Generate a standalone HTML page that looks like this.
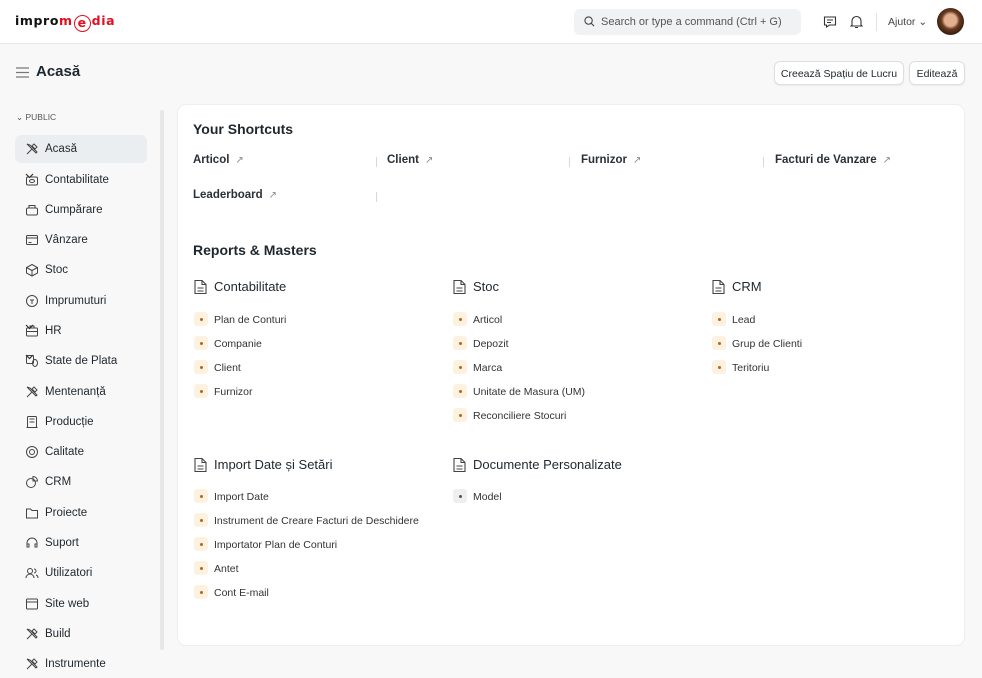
<!DOCTYPE html>
<html><head><meta charset="utf-8"><style>
*{box-sizing:border-box;margin:0;padding:0}
body{width:982px;height:678px;overflow:hidden;background:#f8f8f8;font-family:"Liberation Sans",sans-serif;color:#1f272e;position:relative}
.hdr{position:absolute;left:0;top:0;width:982px;height:44px;background:#fff;border-bottom:1px solid #e8e9ea}
.abs{position:absolute}
.search{left:574px;top:9px;width:227px;height:26px;background:#f1f2f3;border-radius:6px;font-size:11px;color:#555;padding:7px 0 0 27px}
.btn{background:#fff;border:1px solid #dcdfe2;border-radius:6px;font-size:10.5px;height:24px;top:61px;padding:6px 0 0;text-align:center;color:#1f272e;box-shadow:0 1px 2px rgba(0,0,0,.06)}
.side{left:15px;width:132px;height:28px;font-size:11.5px;color:#1f272e;padding:8px 0 0 30px;border-radius:6px}
.side svg{position:absolute;left:10px;top:7px}
.chev{position:absolute;left:112px;top:9px}
.card{left:177px;top:104px;width:788px;height:542px;background:#fff;border:1px solid #eceef0;border-radius:9px}
.h2{font-size:14px;font-weight:bold}
.sc{font-size:11.5px;font-weight:bold;color:#2a3036}
.sc span{color:#888;font-weight:normal;font-size:10px;margin-left:6px}
.sep{width:1px;height:10px;background:#d8d8d8}
.gh{font-size:13px;color:#1f272e}
.gh svg{position:absolute;left:0;top:0}
.it{font-size:10.5px;color:#333}
.it i{position:absolute;left:-20px;top:-2px;width:14px;height:14px;background:#fdf1e0;border-radius:3px}
.it i:after{content:"";position:absolute;left:6px;top:6px;width:3px;height:3px;border-radius:50%;background:#b5651d}
.it i.g{background:#eeeff1}.it i.g:after{background:#555}
</style></head><body>
<div class="hdr">
 <div class="abs" style="left:15px;top:14px;font-size:12.5px;font-weight:bold;letter-spacing:0.6px;font-family:'DejaVu Sans',sans-serif;line-height:14px"><span style="color:#111">impro</span><span style="color:#e01020">m<span style="display:inline-block;border:1.5px solid #e01020;border-radius:50%;width:17px;height:17px;text-align:center;line-height:14px;margin:0 1px;vertical-align:-2px">e</span>dia</span></div>
 <div class="abs search"><svg class="abs" style="left:10px;top:7px" width="11" height="11" viewBox="0 0 12 12"><circle cx="5" cy="5" r="4" fill="none" stroke="#444" stroke-width="1.2"/><path d="M8 8l3 3" stroke="#444" stroke-width="1.2"/></svg>Search or type a command (Ctrl + G)</div>
 <svg class="abs" style="left:823px;top:15px" width="14" height="14" viewBox="0 0 14 14"><path d="M1.5 2h11v8h-6l-3 2v-2h-2z" fill="none" stroke="#333" stroke-width="1.1"/><path d="M4 5h6M4 7.5h4" stroke="#333"/></svg>
 <svg class="abs" style="left:850px;top:14px" width="13" height="15" viewBox="0 0 13 15"><path d="M2 11V7a4.5 4.5 0 019 0v4l1 1H1z M5 13.5h3" fill="none" stroke="#333" stroke-width="1.1"/></svg>
 <div class="abs" style="left:876px;top:13px;width:1px;height:18px;background:#e2e2e2"></div>
 <div class="abs" style="left:888px;top:16px;font-size:10.5px;color:#444">Ajutor ⌄</div>
 <div class="abs" style="left:937px;top:8px;width:27px;height:27px;border-radius:50%;background:radial-gradient(circle at 50% 45%,#e0b090 0 30%,#6a3a20 45%,#3a2010 70%,#b03020 100%)"></div>
</div>
<svg class="abs" style="left:16px;top:67px" width="13" height="11" viewBox="0 0 13 11"><path d="M0 1h13M0 5.5h13M0 10h13" stroke="#777" stroke-width="1.2"/></svg>
<div class="abs" style="left:36px;top:63px;font-size:15px;font-weight:bold">Acasă</div>
<div class="abs btn" style="left:774px;width:130px">Creează Spațiu de Lucru</div>
<div class="abs btn" style="left:909px;width:56px">Editează</div>

<div class="abs" style="left:16px;top:112px;font-size:8.5px;color:#555">⌄ PUBLIC</div>
<div class="abs" style="left:160px;top:110px;width:4px;height:540px;background:#e6e7e9;border-radius:2px"></div>
<div class="abs side" style="top:135px;background:#ebeef0"><svg width="14" height="14" viewBox="0 0 14 14" fill="none" stroke="#444"><path d="M2 12l5-5M9 2l3 3-2 2-3-3zM2 2l3 1 7 7-1 1-7-7z"/></svg>Acasă</div>
<div class="abs side" style="top:165.5px"><svg width="14" height="14" viewBox="0 0 14 14" fill="none" stroke="#444"><rect x="1.5" y="4" width="11" height="8" rx="1.5"/><ellipse cx="7" cy="8" rx="2.5" ry="1.5"/></svg>Contabilitate<svg class="chev" width="9" height="6" viewBox="0 0 9 6"><path d="M1 1l3.5 3.5L8 1" fill="none" stroke="#333" stroke-width="1.2"/></svg></div>
<div class="abs side" style="top:195.8px"><svg width="14" height="14" viewBox="0 0 14 14" fill="none" stroke="#444"><rect x="1.5" y="5" width="11" height="7" rx="1.5"/><path d="M4 5V2.5h6V5"/></svg>Cumpărare</div>
<div class="abs side" style="top:226px"><svg width="14" height="14" viewBox="0 0 14 14" fill="none" stroke="#444"><rect x="1.5" y="2.5" width="11" height="9" rx="1"/><path d="M1.5 5h11M3.5 9.5h3"/></svg>Vânzare</div>
<div class="abs side" style="top:256.3px"><svg width="14" height="14" viewBox="0 0 14 14" fill="none" stroke="#444"><path d="M7 1.5l5.5 3v5.5L7 13 1.5 10V4.5zM1.5 4.5L7 7.5l5.5-3M7 7.5V13"/></svg>Stoc</div>
<div class="abs side" style="top:286.6px"><svg width="14" height="14" viewBox="0 0 14 14" fill="none" stroke="#444"><circle cx="7" cy="7" r="5.5"/><path d="M5 6h4M7 6v4"/></svg>Imprumuturi</div>
<div class="abs side" style="top:316.9px"><svg width="14" height="14" viewBox="0 0 14 14" fill="none" stroke="#444"><rect x="1.5" y="4" width="11" height="8" rx="1"/><path d="M5 4V2h4v2M1.5 7.5h11"/></svg>HR<svg class="chev" width="9" height="6" viewBox="0 0 9 6"><path d="M1 1l3.5 3.5L8 1" fill="none" stroke="#333" stroke-width="1.2"/></svg></div>
<div class="abs side" style="top:347.2px"><svg width="14" height="14" viewBox="0 0 14 14" fill="none" stroke="#444"><rect x="1.5" y="1.5" width="7" height="8" rx="1"/><ellipse cx="10" cy="9" rx="2.5" ry="3.5"/></svg>State de Plata<svg class="chev" width="9" height="6" viewBox="0 0 9 6"><path d="M1 1l3.5 3.5L8 1" fill="none" stroke="#333" stroke-width="1.2"/></svg></div>
<div class="abs side" style="top:377.5px"><svg width="14" height="14" viewBox="0 0 14 14" fill="none" stroke="#444"><path d="M2 12l5-5M9 2l3 3-2 2-3-3zM2 2l3 1 7 7-1 1-7-7z"/></svg>Mentenanță</div>
<div class="abs side" style="top:407.8px"><svg width="14" height="14" viewBox="0 0 14 14" fill="none" stroke="#444"><rect x="2.5" y="1.5" width="9" height="11" rx="1"/><path d="M4.5 4h5M4.5 7h5M1.5 12.5h11"/></svg>Producție</div>
<div class="abs side" style="top:438px"><svg width="14" height="14" viewBox="0 0 14 14" fill="none" stroke="#444"><circle cx="7" cy="7" r="5.5"/><circle cx="7" cy="7" r="2.5"/></svg>Calitate</div>
<div class="abs side" style="top:468.3px"><svg width="14" height="14" viewBox="0 0 14 14" fill="none" stroke="#444"><circle cx="6" cy="8" r="4.5"/><path d="M8 1.5a4.5 4.5 0 014.5 4.5H8z"/></svg>CRM</div>
<div class="abs side" style="top:498.6px"><svg width="14" height="14" viewBox="0 0 14 14" fill="none" stroke="#444"><path d="M1.5 3h4l1.5 1.5h5.5v7.5h-11z"/></svg>Proiecte</div>
<div class="abs side" style="top:528.9px"><svg width="14" height="14" viewBox="0 0 14 14" fill="none" stroke="#444"><path d="M2 9V7a5 5 0 0110 0v2M2 8h2v3H2zM10 8h2v3h-2z"/></svg>Suport</div>
<div class="abs side" style="top:559.2px"><svg width="14" height="14" viewBox="0 0 14 14" fill="none" stroke="#444"><circle cx="5" cy="5" r="2.5"/><path d="M1 12a4 4 0 018 0M9 3a2 2 0 010 4M11 9a3 3 0 012 3"/></svg>Utilizatori</div>
<div class="abs side" style="top:589.5px"><svg width="14" height="14" viewBox="0 0 14 14" fill="none" stroke="#444"><rect x="1.5" y="2" width="11" height="10" rx="1"/><path d="M1.5 5h11"/></svg>Site web</div>
<div class="abs side" style="top:619.8px"><svg width="14" height="14" viewBox="0 0 14 14" fill="none" stroke="#444"><path d="M2 12l5-5M9 2l3 3-2 2-3-3zM2 2l3 1 7 7-1 1-7-7z"/></svg>Build</div>
<div class="abs side" style="top:650px"><svg width="14" height="14" viewBox="0 0 14 14" fill="none" stroke="#444"><path d="M2 12l5-5M9 2l3 3-2 2-3-3zM2 2l3 1 7 7-1 1-7-7z"/></svg>Instrumente</div>

<div class="abs card"></div>
<div class="abs h2" style="left:193px;top:121px">Your Shortcuts</div>
<div class="abs sc" style="left:193px;top:154px">Articol<span>↗</span></div>
<div class="abs sep" style="left:376px;top:157px"></div>
<div class="abs sc" style="left:387px;top:154px">Client<span>↗</span></div>
<div class="abs sep" style="left:569px;top:157px"></div>
<div class="abs sc" style="left:581px;top:154px">Furnizor<span>↗</span></div>
<div class="abs sep" style="left:763px;top:157px"></div>
<div class="abs sc" style="left:775px;top:154px">Facturi de Vanzare<span>↗</span></div>
<div class="abs sc" style="left:193px;top:189px">Leaderboard<span>↗</span></div>
<div class="abs sep" style="left:376px;top:192px"></div>

<div class="abs h2" style="left:193px;top:242px">Reports &amp; Masters</div>

<div class="abs gh" style="left:193px;top:279px;padding-left:21px"><svg width="15" height="16" viewBox="0 0 15 16" fill="none" stroke="#444" stroke-width="1.1"><path d="M2 1.5h7l4 4v9H2zM9 1.5v4h4M4.5 9h6M4.5 12h6"/></svg>Contabilitate</div>
<div class="abs it" style="left:214px;top:314px"><i></i>Plan de Conturi</div>
<div class="abs it" style="left:214px;top:338px"><i></i>Companie</div>
<div class="abs it" style="left:214px;top:362px"><i></i>Client</div>
<div class="abs it" style="left:214px;top:386px"><i></i>Furnizor</div>

<div class="abs gh" style="left:452px;top:279px;padding-left:21px"><svg width="15" height="16" viewBox="0 0 15 16" fill="none" stroke="#444" stroke-width="1.1"><path d="M2 1.5h7l4 4v9H2zM9 1.5v4h4M4.5 9h6M4.5 12h6"/></svg>Stoc</div>
<div class="abs it" style="left:473px;top:314px"><i></i>Articol</div>
<div class="abs it" style="left:473px;top:338px"><i></i>Depozit</div>
<div class="abs it" style="left:473px;top:362px"><i></i>Marca</div>
<div class="abs it" style="left:473px;top:386px"><i></i>Unitate de Masura (UM)</div>
<div class="abs it" style="left:473px;top:410px"><i></i>Reconciliere Stocuri</div>

<div class="abs gh" style="left:711px;top:279px;padding-left:21px"><svg width="15" height="16" viewBox="0 0 15 16" fill="none" stroke="#444" stroke-width="1.1"><path d="M2 1.5h7l4 4v9H2zM9 1.5v4h4M4.5 9h6M4.5 12h6"/></svg>CRM</div>
<div class="abs it" style="left:732px;top:314px"><i></i>Lead</div>
<div class="abs it" style="left:732px;top:338px"><i></i>Grup de Clienti</div>
<div class="abs it" style="left:732px;top:362px"><i></i>Teritoriu</div>

<div class="abs gh" style="left:193px;top:457px;padding-left:21px"><svg width="15" height="16" viewBox="0 0 15 16" fill="none" stroke="#444" stroke-width="1.1"><path d="M2 1.5h7l4 4v9H2zM9 1.5v4h4M4.5 9h6M4.5 12h6"/></svg>Import Date și Setări</div>
<div class="abs it" style="left:214px;top:491px"><i></i>Import Date</div>
<div class="abs it" style="left:214px;top:515px"><i></i>Instrument de Creare Facturi de Deschidere</div>
<div class="abs it" style="left:214px;top:539px"><i></i>Importator Plan de Conturi</div>
<div class="abs it" style="left:214px;top:563px"><i></i>Antet</div>
<div class="abs it" style="left:214px;top:587px"><i></i>Cont E-mail</div>

<div class="abs gh" style="left:452px;top:457px;padding-left:21px"><svg width="15" height="16" viewBox="0 0 15 16" fill="none" stroke="#444" stroke-width="1.1"><path d="M2 1.5h7l4 4v9H2zM9 1.5v4h4M4.5 9h6M4.5 12h6"/></svg>Documente Personalizate</div>
<div class="abs it" style="left:473px;top:491px"><i class="g"></i>Model</div>
</body></html>
